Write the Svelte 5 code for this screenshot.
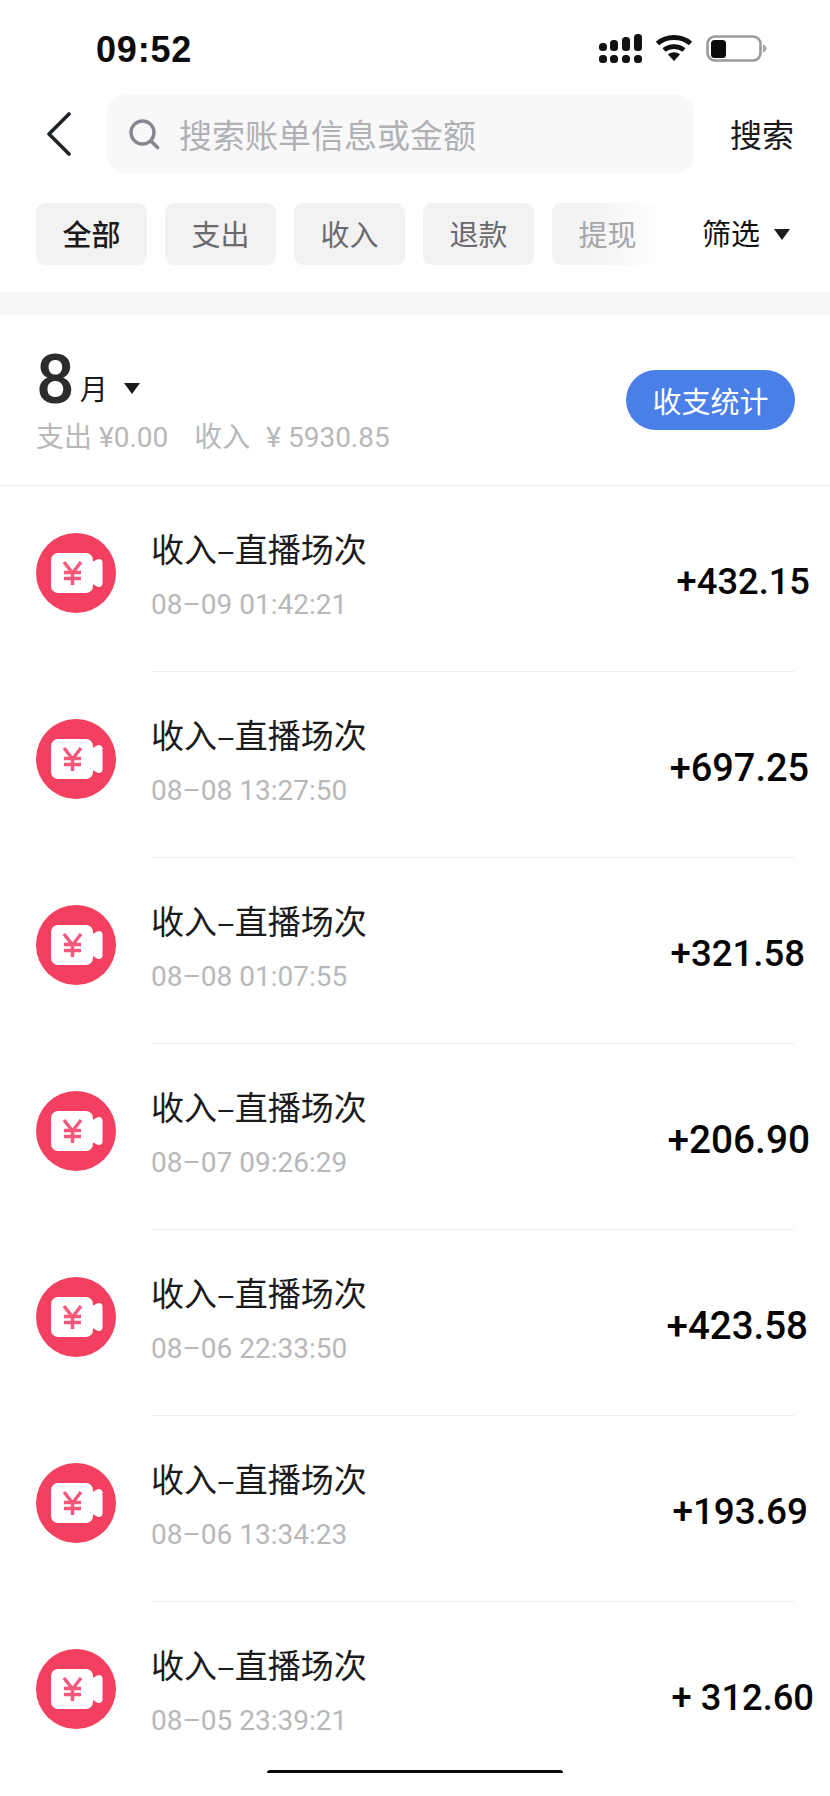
<script>
  const tabs = [
    { label: '全部', kind: 'active' },
    { label: '支出', kind: '' },
    { label: '收入', kind: '' },
    { label: '退款', kind: '' },
    { label: '提现', kind: 'fade' }
  ];
  const rows = [
    { time: '08–09 01:42:21', amount: '+432.15', shift: 16, size: 36.3 },
    { time: '08–08 13:27:50', amount: '+697.25', shift: 15, size: 37.9 },
    { time: '08–08 01:07:55', amount: '+321.58', shift: 11, size: 36.6 },
    { time: '08–07 09:26:29', amount: '+206.90', shift: 16, size: 38.8 },
    { time: '08–06 22:33:50', amount: '+423.58', shift: 14, size: 38.5 },
    { time: '08–06 13:34:23', amount: '+193.69', shift: 14, size: 36.9 },
    { time: '08–05 23:39:21', amount: '+ 312.60', shift: 20, size: 36.3 }
  ];
</script>

<div class="page">
  <header class="status">
    <span class="clock">09:52</span>
    <div class="status-icons">
      <svg class="signal" width="44" height="30" viewBox="0 0 44 30" fill="#111">
        <rect x="0" y="9" width="8" height="8" rx="3.5" />
        <rect x="11" y="6" width="8" height="11" rx="3.5" />
        <rect x="23" y="3" width="8" height="14" rx="3.5" />
        <rect x="35" y="0" width="8" height="17" rx="3.5" />
        <rect x="0" y="21" width="8" height="8" rx="3.5" />
        <rect x="11" y="21" width="8" height="8" rx="3.5" />
        <rect x="23" y="21" width="8" height="8" rx="3.5" />
        <rect x="35" y="21" width="8" height="8" rx="3.5" />
      </svg>
      <svg class="wifi" width="38" height="28" viewBox="0 0 38 28">
        <path d="M2.5 9.5C11.5 1.5 26.5 1.5 35.5 9.5" fill="none" stroke="#111" stroke-width="5" />
        <path d="M9 16C14.5 11.5 23.5 11.5 29 16" fill="none" stroke="#111" stroke-width="4.6" />
        <path d="M13 20.5C16.5 17.5 21.5 17.5 25 20.5L19 27Z" fill="#111" />
      </svg>
      <svg class="battery" width="61" height="27" viewBox="0 0 61 27">
        <rect x="1.5" y="1.5" width="53" height="24" rx="7.5" fill="#fff" stroke="#9a9a9a" stroke-width="2.6" />
        <rect x="5" y="5" width="15" height="18" rx="3.5" fill="#0c0c0c" />
        <path d="M57 9.5C59.5 10.5 60.5 12 60.5 13.5C60.5 15 59.5 16.5 57 17.5Z" fill="#a5a5a5" />
      </svg>
    </div>
  </header>

  <div class="search-row">
    <svg class="back" width="26" height="44" viewBox="0 0 26 44">
      <path d="M23 2L3 22L23 42" fill="none" stroke="#1f2329" stroke-width="3.6" stroke-linecap="round" stroke-linejoin="round" />
    </svg>
    <div class="search-box">
      <svg width="32" height="32" viewBox="0 0 32 32">
        <circle cx="14.5" cy="14.5" r="11.5" fill="none" stroke="#85878c" stroke-width="3.4" />
        <path d="M23 23L29.5 29.5" stroke="#85878c" stroke-width="3.6" stroke-linecap="round" />
      </svg>
      <span class="placeholder">搜索账单信息或金额</span>
    </div>
    <span class="search-btn">搜索</span>
  </div>

  <div class="tab-row">
    <div class="tabs">
      {#each tabs as tab}
        <span class="tab {tab.kind}">{tab.label}</span>
      {/each}
    </div>
    <div class="filter">
      <span class="filter-label">筛选</span>
      <i class="caret"></i>
    </div>
  </div>

  <div class="band"></div>

  <section class="summary">
    <div class="summary-left">
      <div class="month">
        <span class="month-num">8</span>
        <span class="month-unit">月</span>
        <i class="caret month-caret"></i>
      </div>
      <div class="totals">
        <span>支出 ¥0.00</span>
        <span class="income">收入</span>
        <span class="income-val">¥ 5930.85</span>
      </div>
    </div>
    <button class="stats-btn">收支统计</button>
  </section>

  <ul class="list">
    {#each rows as row}
      <li class="row">
        <svg class="avatar" width="80" height="80" viewBox="0 0 80 80">
          <circle cx="40" cy="40" r="40" fill="#f33f60" />
          <rect x="15" y="20" width="42" height="40" rx="7" fill="#fff" />
          <path d="M55 30L61 26.5C63.5 25 66.5 26.5 66.5 29.5V50.5C66.5 53.5 63.5 55 61 53.5L55 50Z" fill="#fff" />
          <g fill="none" stroke="#f4587a" stroke-width="3.4">
            <path d="M28 29L36.5 40L45 29M36.5 40V52" />
            <path d="M28 39.5H45M28 45.5H45" />
          </g>
        </svg>
        <div class="body">
          <div class="texts">
            <div class="title">收入–直播场次</div>
            <div class="time">{row.time}</div>
          </div>
          <div class="amount" style="margin-right:-{row.shift}px;font-size:{row.size}px">{row.amount}</div>
        </div>
      </li>
    {/each}
  </ul>

  <div class="home-bar"></div>
</div>

<style>
  :global(body) {
    margin: 0;
    background: #fff;
  }
  .page {
    position: relative;
    width: 830px;
    height: 1796px;
    overflow: hidden;
    background: #fff;
    font-family: "Noto Sans CJK SC", "Liberation Sans", sans-serif;
    color: #1b1b1b;
  }
  .status {
    display: flex;
    justify-content: space-between;
    box-sizing: border-box;
    height: 95px;
    padding: 30px 63px 0 96px;
  }
  .clock {
    font-family: "Liberation Sans", sans-serif;
    font-weight: 700;
    font-size: 36px;
    line-height: 40px;
    letter-spacing: 0.8px;
    color: #0c0c0c;
  }
  .status-icons {
    display: flex;
    align-items: flex-start;
    padding-top: 4px;
  }
  .wifi {
    margin: 0 13px 0 12px;
  }
  .battery {
    margin-top: 1px;
  }
  .search-row {
    display: flex;
    align-items: center;
    height: 78px;
    padding-left: 46px;
  }
  .back {
    width: 26px;
  }
  .search-box {
    display: flex;
    align-items: center;
    box-sizing: border-box;
    width: 587px;
    height: 78px;
    margin-left: 35px;
    padding-left: 21px;
    border-radius: 18px;
    background: #f8f8f9;
  }
  .placeholder {
    margin-left: 19px;
    font-size: 33px;
    color: #b0b1b4;
  }
  .search-btn {
    margin-left: 36px;
    font-size: 32px;
    line-height: 44px;
    margin-top: -3px;
    color: #1b1b1b;
  }
  .tab-row {
    display: flex;
    align-items: center;
    margin-top: 30px;
    padding-left: 36px;
  }
  .tabs {
    display: flex;
    gap: 18px;
    width: 666px;
  }
  .tab {
    flex: none;
    width: 111px;
    height: 62px;
    border-radius: 9px;
    background: #f2f2f3;
    font-size: 29px;
    line-height: 60px;
    text-align: center;
    color: #6a6a6e;
  }
  .active {
    color: #1b1b1b;
    font-weight: 500;
  }
  .fade {
    background: linear-gradient(to right, #f3f3f4 35%, #ffffff 100%);
    color: #a6a6a8;
  }
  .filter {
    display: flex;
    align-items: center;
    font-size: 29px;
    line-height: 60px;
    color: #111;
  }
  .filter-label {
    margin-top: -4px;
  }
  .caret {
    display: block;
    width: 0;
    height: 0;
    margin-left: 14px;
    border-left: 8px solid transparent;
    border-right: 8px solid transparent;
    border-top: 11px solid #1b1b1b;
  }
  .band {
    height: 23px;
    margin-top: 27px;
    background: #f7f7f8;
  }
  .summary {
    display: flex;
    align-items: center;
    justify-content: space-between;
    box-sizing: border-box;
    height: 171px;
    padding: 0 35px 0 36px;
    border-bottom: 1px solid #ececec;
  }
  .summary-left {
    margin-top: -6px;
  }
  .month {
    display: flex;
    align-items: center;
    height: 82px;
  }
  .month-num {
    font-family: Roboto, sans-serif;
    font-weight: 500;
    font-size: 68px;
    line-height: 82px;
    color: #2c2c2c;
  }
  .month-unit {
    margin: 16px 0 0 5px;
    font-size: 28px;
  }
  .month-caret {
    margin: 16px 0 0 16px;
  }
  .totals {
    display: flex;
    font-family: Roboto, "Noto Sans CJK SC", sans-serif;
    font-size: 28px;
    line-height: 34px;
    color: #b8b8b8;
  }
  .income {
    margin-left: 26px;
  }
  .income-val {
    margin-left: 16px;
  }
  .stats-btn {
    width: 169px;
    height: 60px;
    padding: 0;
    border: 0;
    border-radius: 30px;
    background: #4a7fe8;
    font-family: inherit;
    font-size: 29px;
    color: #fff;
  }
  .list {
    margin: 0;
    padding: 0;
    list-style: none;
  }
  .row {
    display: flex;
    height: 186px;
    padding: 0 36px;
  }
  .avatar {
    flex: none;
    margin-top: 47px;
  }
  .body {
    display: flex;
    flex: 1;
    justify-content: space-between;
    box-sizing: border-box;
    height: 186px;
    margin-left: 35px;
    border-bottom: 1px solid #ececec;
  }
  .row:last-child .body {
    border-bottom: 0;
  }
  .title {
    margin-top: 40px;
    font-size: 33px;
    line-height: 44px;
    color: #1b1b1b;
  }
  .time {
    margin-top: 15px;
    font-family: Roboto, sans-serif;
    font-size: 28px;
    line-height: 40px;
    color: #b8b8b8;
  }
  .amount {
    margin-top: 71px;
    font-family: Roboto, sans-serif;
    font-weight: 500;
    line-height: 50px;
    color: #050505;
  }
  .home-bar {
    position: absolute;
    left: 267px;
    top: 1770px;
    width: 296px;
    height: 3px;
    border-radius: 3px 3px 0 0;
    background: #0a0a0a;
  }
</style>
